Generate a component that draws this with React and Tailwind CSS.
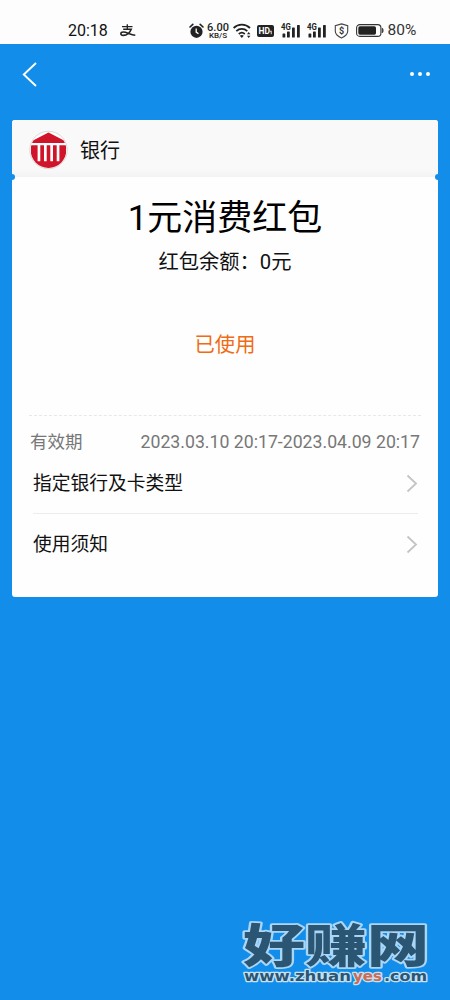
const rows = ['指定银行及卡类型', '使用须知']

function AlarmIcon() {
  return (
    <svg width="15" height="16" viewBox="0 0 15 16" className="shrink-0">
      <circle cx="7.5" cy="8.8" r="6.1" fill="#222" />
      <path d="M1 4 3.8 1.4M14 4 11.2 1.4" stroke="#222" strokeWidth="1.6" strokeLinecap="round" />
      <path d="M7.2 5.5v3.6l2.3 1.7" fill="none" stroke="#fff" strokeWidth="1.3" />
    </svg>
  )
}

function WifiIcon() {
  return (
    <svg width="19" height="16" viewBox="0 0 19 16" className="shrink-0" fill="none" stroke="#222" strokeWidth="1.8">
      <path d="M.6 5C5.2.6 12.4.6 17 5" />
      <path d="M3.3 8.2c3.2-3 7.8-3 11 0" />
      <path d="M5.8 11c1.7-1.5 4.3-1.5 6 0" />
      <path d="m6.8 12.7 2 2.2 2-2.2c-1.200-.9-2.800-.9-4 0z" fill="#222" stroke="none" />
      <path d="m14 11.2 1.7-2.2 1.7 2.2zM14 12.7l1.7 2.2 1.7-2.2z" fill="#222" stroke="none" />
    </svg>
  )
}

function HdIcon() {
  return (
    <svg width="17" height="12" viewBox="0 0 17 12" className="shrink-0">
      <rect width="17" height="12" rx="2" fill="#222" />
      <text x="1.6" y="9.2" fontSize="8.5" fontWeight="700" fill="#fff" className="font-['Roboto',sans-serif]">HD</text>
      <path d="M13.2 6.500l1-.6v3.3" fill="none" stroke="#fff" strokeWidth="0.9" />
    </svg>
  )
}

function SignalIcon() {
  return (
    <svg width="20" height="16" viewBox="0 0 20 16" className="shrink-0" fill="#222">
      <text x="0" y="7.2" fontSize="8.5" fontWeight="700" textLength="9.8" lengthAdjust="spacingAndGlyphs" className="font-['Roboto',sans-serif]">4G</text>
      <rect x="1.5" y="10.5" width="2.8" height="4" rx="0.6" />
      <rect x="6" y="8.5" width="2.8" height="6" rx="0.6" />
      <rect x="11" y="4.5" width="2.8" height="10" rx="0.6" />
      <rect x="16" y="2" width="2.8" height="12.5" rx="0.6" />
    </svg>
  )
}

function ShieldIcon() {
  return (
    <svg width="15" height="16" viewBox="0 0 15 16" className="shrink-0">
      <path d="M7.5.9 13.7 2.7v5.6c0 3-2.3 5-6.2 6.6-3.900-1.600-6.200-3.600-6.200-6.600V2.700z" fill="none" stroke="#444" strokeWidth="1.1" />
      <text x="7.5" y="11" fontSize="9" fontWeight="700" textAnchor="middle" fill="#333" className="font-['Roboto',sans-serif]">$</text>
    </svg>
  )
}

function BatteryIcon() {
  return (
    <svg width="28" height="13" viewBox="0 0 28 13" className="shrink-0">
      <rect x="0.6" y="0.6" width="24.3" height="11.8" rx="3.2" fill="none" stroke="#333" strokeWidth="1.1" />
      <rect x="2.3" y="2.3" width="17.7" height="8.4" rx="1.6" fill="#222" />
      <path d="M26.2 4c1.4.8 1.4 4.2 0 5z" fill="#333" stroke="#333" strokeWidth="0.6" />
    </svg>
  )
}

function BankLogo() {
  return (
    <svg width="40" height="40" viewBox="0 0 40 40" className="shrink-0">
      <defs>
        <clipPath id="bank">
          <circle cx="19.5" cy="20" r="17.9" />
        </clipPath>
      </defs>
      <circle cx="19.5" cy="20" r="18.7" fill="#fff" stroke="#cfcfcf" strokeWidth="0.8" />
      <g clipPath="url(#bank)" fill="#d0142a">
        <path d="M19.5 2.500 37 11.500v1.500H2v-1.500z" />
        <path d="M2 15.200h35v23H2z" />
        <path d="M8.600 15v16.300h2.700V15zM15 15v16.300h2.700V15zM21.300 15v16.300H24V15zM27.700 15v16.300h2.700V15z" fill="#fff" />
      </g>
    </svg>
  )
}

function StatusBar() {
  return (
    <div className="flex h-11 items-center bg-[#fdfdfd] pt-[17px] pl-[68px] text-[#222]">
      <span className="w-[52px] text-[16px] leading-none text-[#111]">20:18</span>
      <svg width="16" height="13" viewBox="0 0 16 13" fill="none" stroke="#222" className="mr-[53px] shrink-0">
        <path d="M2 2.700h10.500M7.300.3v4.600" strokeWidth="1.3" />
        <path d="M3.200 5.300h8C9.800 9 6.800 11.400 3.300 11.400-.2 11.400.3 8 3.300 8c3.500 0 7 2.800 12 3.300" strokeWidth="1.6" />
      </svg>
      <AlarmIcon />
      <div className="ml-[3px] flex w-[22px] flex-col items-center font-medium">
        <span className="text-[11px] leading-[9px]">6.00</span>
        <span className="text-[8px] leading-[7px]">KB/S</span>
      </div>
      <div className="ml-1 flex items-center">
        <WifiIcon />
        <div className="ml-[5px]"><HdIcon /></div>
        <div className="ml-[7px] flex gap-[6px]">
          <SignalIcon />
          <SignalIcon />
        </div>
        <div className="ml-[7px]"><ShieldIcon /></div>
        <div className="ml-[7px]"><BatteryIcon /></div>
      </div>
      <span className="ml-[3.5px] text-[15.5px] leading-none text-[#333]">80%</span>
    </div>
  )
}

function NavBar() {
  return (
    <div className="flex h-[76px] items-start justify-between pt-[17px] pr-5 pl-[21px]">
      <svg width="18" height="27" viewBox="0 0 18 27" fill="none" stroke="#fff" strokeWidth="1.9">
        <path d="M15 2 2.800 13.500 15 25" />
      </svg>
      <div className="mt-[11px] flex gap-1">
        <span className="size-1 rounded-full bg-white" />
        <span className="size-1 rounded-full bg-white" />
        <span className="size-1 rounded-full bg-white" />
      </div>
    </div>
  )
}

function Watermark() {
  return (
    <svg
      width="200"
      height="100"
      viewBox="0 0 200 100"
      className="absolute right-[10px] bottom-0 overflow-visible"
      strokeLinejoin="round"
      paintOrder="stroke"
    >
      <text
        x="3"
        y="75"
        fontSize="59"
        fontWeight="900"
        textLength="186"
        lengthAdjust="spacingAndGlyphs"
        fill="#2b5673"
        stroke="#a9d5f7"
        strokeWidth="4.5"
        transform="translate(0 3.5) scale(1 .78)"
        className="font-['Noto_Sans_CJK_SC',sans-serif]"
      >
        好赚网
      </text>
      <g fontSize="13.5" fontWeight="700" fill="#2b5673" stroke="#c3e1f7" strokeWidth="2.6" className="font-['DejaVu_Sans',sans-serif]">
        <text x="4" y="81" textLength="107" lengthAdjust="spacingAndGlyphs">www.zhuan</text>
        <text x="113" y="81" textLength="29" lengthAdjust="spacingAndGlyphs" fill="#c96b55">yes</text>
        <text x="144" y="81" textLength="43" lengthAdjust="spacingAndGlyphs">.com</text>
      </g>
    </svg>
  )
}

export default function App() {
  return (
    <div className="relative h-[1000px] w-[450px] overflow-hidden bg-[#128eea] font-['Roboto','Noto_Sans_CJK_SC',sans-serif] text-[#111]">
      <StatusBar />
      <NavBar />

      <main className="relative ml-3 h-[477px] w-[426px] overflow-hidden rounded-[3px] bg-[#fefefe]">
        <header className="flex h-[57px] items-center bg-gradient-to-b from-[#f9f9f9] from-85% to-[#f3f3f3] pt-[3px] pl-[17px]">
          <BankLogo />
          <span className="mt-[2px] ml-[11px] text-[20px] leading-none">银行</span>
        </header>
        <span className="absolute top-[54px] -left-[3px] size-[6px] rounded-full bg-[#128eea]" />
        <span className="absolute top-[54px] -right-[3px] size-[6px] rounded-full bg-[#128eea]" />

        <section className="flex h-[238px] flex-col items-center pt-[17px]">
          <h1 className="text-[35px] leading-[50px] text-black">1元消费红包</h1>
          <p className="mt-[3px] text-[20.3px] leading-[30px]">红包余额：0元</p>
          <p className="mt-[53px] text-[20.3px] leading-[30px] text-[#ef6c14]">已使用</p>
        </section>

        <div className="mx-[17px] border-t border-dashed border-[#e8e8e8]" />
        <div className="mx-[18px] flex h-[52px] items-center justify-between text-[17.5px] text-[#777]">
          <span>有效期</span>
          <span className="text-[17.7px]">2023.03.10 20:17-2023.04.09 20:17</span>
        </div>

        <ul className="-mt-[15px] mr-5 ml-[21px]">
          {rows.map((label) => (
            <li key={label} className="flex h-[61px] items-center justify-between border-b border-[#ececec] text-[18.75px] last:border-b-0">
              <span className="pt-[2px]">{label}</span>
              <svg width="12" height="19" viewBox="0 0 12 19" fill="none" stroke="#c4c4c4" strokeWidth="1.8">
                <path d="M1.500 1.500 10 9.500l-8.500 8" />
              </svg>
            </li>
          ))}
        </ul>
      </main>

      <Watermark />
    </div>
  )
}
